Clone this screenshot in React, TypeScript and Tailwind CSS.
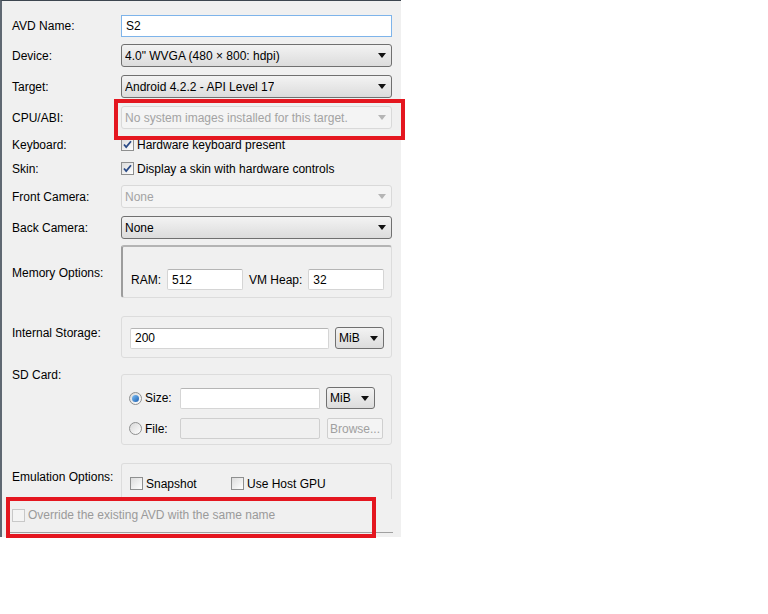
import React from 'react'

const font = { fontFamily: '"Liberation Sans", Arial, sans-serif' }

function Arrow({ disabled }: { disabled?: boolean }) {
  return (
    <svg width="8" height="5" viewBox="0 0 8 5" className="shrink-0">
      <path d="M0 0h8L4 5z" fill={disabled ? '#b5b5b5' : '#111'} />
    </svg>
  )
}

function Select({ value, width, disabled, h = 23 }: { value: string; width?: string; disabled?: boolean; h?: number }) {
  return (
    <div
      className={
        'flex items-center justify-between rounded-[3px] border pl-[3px] pr-[5px] text-[12px] ' +
        (width ?? 'w-full') +
        (disabled
          ? ' border-[#d9d9d9] bg-[#f4f4f4] text-[#a3a3a3]'
          : ' border-[#707070] bg-gradient-to-b from-[#f3f3f3] to-[#dcdcdc] text-black')
      }
      style={{ height: h }}
    >
      <span className="truncate">{value}</span>
      <Arrow disabled={disabled} />
    </div>
  )
}

function Input({ value, width, disabled }: { value?: string; width: string; disabled?: boolean }) {
  return (
    <div
      className={
        'flex h-[21px] items-center rounded-[2px] border px-[4px] text-[12px] text-black ' +
        width +
        (disabled ? ' border-[#cfcfcf] bg-[#f0f0f0]' : ' border-[#d5d5d5] border-t-[#b5b5b5] bg-white')
      }
    >
      {value}
    </div>
  )
}

function Check({ checked, disabled }: { checked?: boolean; disabled?: boolean }) {
  return (
    <span
      className={
        'flex h-[13px] w-[13px] shrink-0 items-center justify-center border ' +
        (disabled ? 'border-[#c8c8c8] bg-[#f4f4f4]' : 'border-[#8e8f8f] bg-gradient-to-br from-[#dcdcdc] to-white')
      }
    >
      {checked && (
        <svg width="9" height="9" viewBox="0 0 9 9">
          <path d="M1 4.5l2.2 2.5L8 1.2" fill="none" stroke="#2a4a86" strokeWidth="1.8" />
        </svg>
      )}
    </span>
  )
}

function Radio({ checked }: { checked?: boolean }) {
  return (
    <span className="flex h-[13px] w-[13px] shrink-0 items-center justify-center rounded-full border border-[#8e8f8f] bg-gradient-to-br from-[#d8d8d8] to-white">
      {checked && <span className="h-[7px] w-[7px] rounded-full bg-gradient-to-br from-[#7ec0f5] to-[#1a5fb0]" />}
    </span>
  )
}

function Label({ children, className }: { children: React.ReactNode; className?: string }) {
  return <div className={'w-[119px] shrink-0 pl-[10px] text-[12px] leading-[16px] text-black ' + (className ?? '')}>{children}</div>
}

function Row({ label, children, mt }: { label: string; children: React.ReactNode; mt: string }) {
  return (
    <div className={'flex items-center ' + mt}>
      <Label>{label}</Label>
      <div className="flex-1">{children}</div>
    </div>
  )
}

export default function App() {
  return (
    <div className="min-h-screen bg-white" style={font}>
      <div className="relative flex h-[537px] w-[401px] flex-col border-l-2 border-t border-l-[#5f6872] border-t-[#3d4650] bg-[#f0f0f0] pr-[9px] pt-[14px]">
        <Row label="AVD Name:" mt="">
          <div className="flex h-[22px] items-center border border-[#7eb4ea] bg-white px-[4px] text-[12px]">S2</div>
        </Row>
        <Row label="Device:" mt="mt-[7px]">
          <Select value={'4.0" WVGA (480 × 800: hdpi)'} />
        </Row>
        <Row label="Target:" mt="mt-[8px]">
          <Select value="Android 4.2.2 - API Level 17" />
        </Row>
        <Row label="CPU/ABI:" mt="mt-[8px]">
          <Select value="No system images installed for this target." disabled />
        </Row>
        <div className="mt-[8px] flex h-[15px] items-center">
          <Label>Keyboard:</Label>
          <Check checked />
          <span className="ml-[3px] text-[12px]">Hardware keyboard present</span>
        </div>
        <div className="mt-[9px] flex h-[15px] items-center">
          <Label>Skin:</Label>
          <Check checked />
          <span className="ml-[3px] text-[12px]">Display a skin with hardware controls</span>
        </div>
        <Row label="Front Camera:" mt="mt-[9px]">
          <Select value="None" disabled />
        </Row>
        <Row label="Back Camera:" mt="mt-[8px]">
          <Select value="None" />
        </Row>

        <div className="mt-[6px] flex">
          <Label className="pt-[20px]">Memory Options:</Label>
          <div className="flex h-[53px] flex-1 items-center gap-[6px] rounded-[3px] border border-[#dcdcdc] border-l-2 border-t-2 border-l-[#9c9c9c] border-t-[#b4b4b4] pl-[8px] pt-[15px] text-[12px]">
            <span>RAM:</span>
            <Input value="512" width="w-[76px]" />
            <span>VM Heap:</span>
            <Input value="32" width="w-[76px]" />
          </div>
        </div>

        <div className="mt-[18px] flex">
          <Label className="pt-[9px]">Internal Storage:</Label>
          <div className="flex h-[42px] flex-1 items-center gap-[6px] rounded-[3px] border border-[#dcdcdc] pl-[8px] pt-[2px] text-[12px]">
            <Input value="200" width="w-[199px]" />
            <Select value="MiB" width="w-[49px]" h={22} />
          </div>
        </div>

        <div className="mt-[9px] flex">
          <Label>SD Card:</Label>
          <div className="mt-[7px] flex h-[71px] flex-1 flex-col gap-[9px] rounded-[3px] border border-[#dcdcdc] pl-[7px] pt-[12px] text-[12px]">
            <div className="flex items-center">
              <Radio checked />
              <span className="ml-[3px] w-[35px]">Size:</span>
              <Input width="w-[140px]" />
              <div className="ml-[6px]">
                <Select value="MiB" width="w-[49px]" h={22} />
              </div>
            </div>
            <div className="flex items-center">
              <Radio />
              <span className="ml-[3px] w-[35px]">File:</span>
              <Input width="w-[140px]" disabled />
              <div className="ml-[7px] flex h-[21px] w-[56px] items-center justify-center rounded-[2px] border border-[#cfcfcf] bg-[#f4f4f4] text-[#a0a0a0]">
                Browse...
              </div>
            </div>
          </div>
        </div>

        <div className="mt-[18px] flex">
          <Label className="pt-[6px]">Emulation Options:</Label>
          <div className="flex h-[36px] flex-1 items-center rounded-t-[3px] border border-b-0 border-[#dcdcdc] pl-[8px] pt-[4px] text-[12px]">
            <Check />
            <span className="ml-[3px] w-[85px]">Snapshot</span>
            <Check />
            <span className="ml-[3px]">Use Host GPU</span>
          </div>
        </div>

        <div className="mt-[7px] flex items-center pl-[10px] text-[12px] text-[#9a9a9a]">
          <Check disabled />
          <span className="ml-[3px]">Override the existing AVD with the same name</span>
        </div>
        <div className="ml-[8px] mt-[8px] h-px w-[383px] bg-[#a0a0a0]" />

        {/* red annotation boxes */}
        <div className="absolute left-[112px] top-[98px] h-[41px] w-[291px] border-4 border-[#e4161f]" />
        <div className="absolute left-[4px] top-[496px] h-[41px] w-[370px] border-4 border-[#e4161f]" />
      </div>
    </div>
  )
}
